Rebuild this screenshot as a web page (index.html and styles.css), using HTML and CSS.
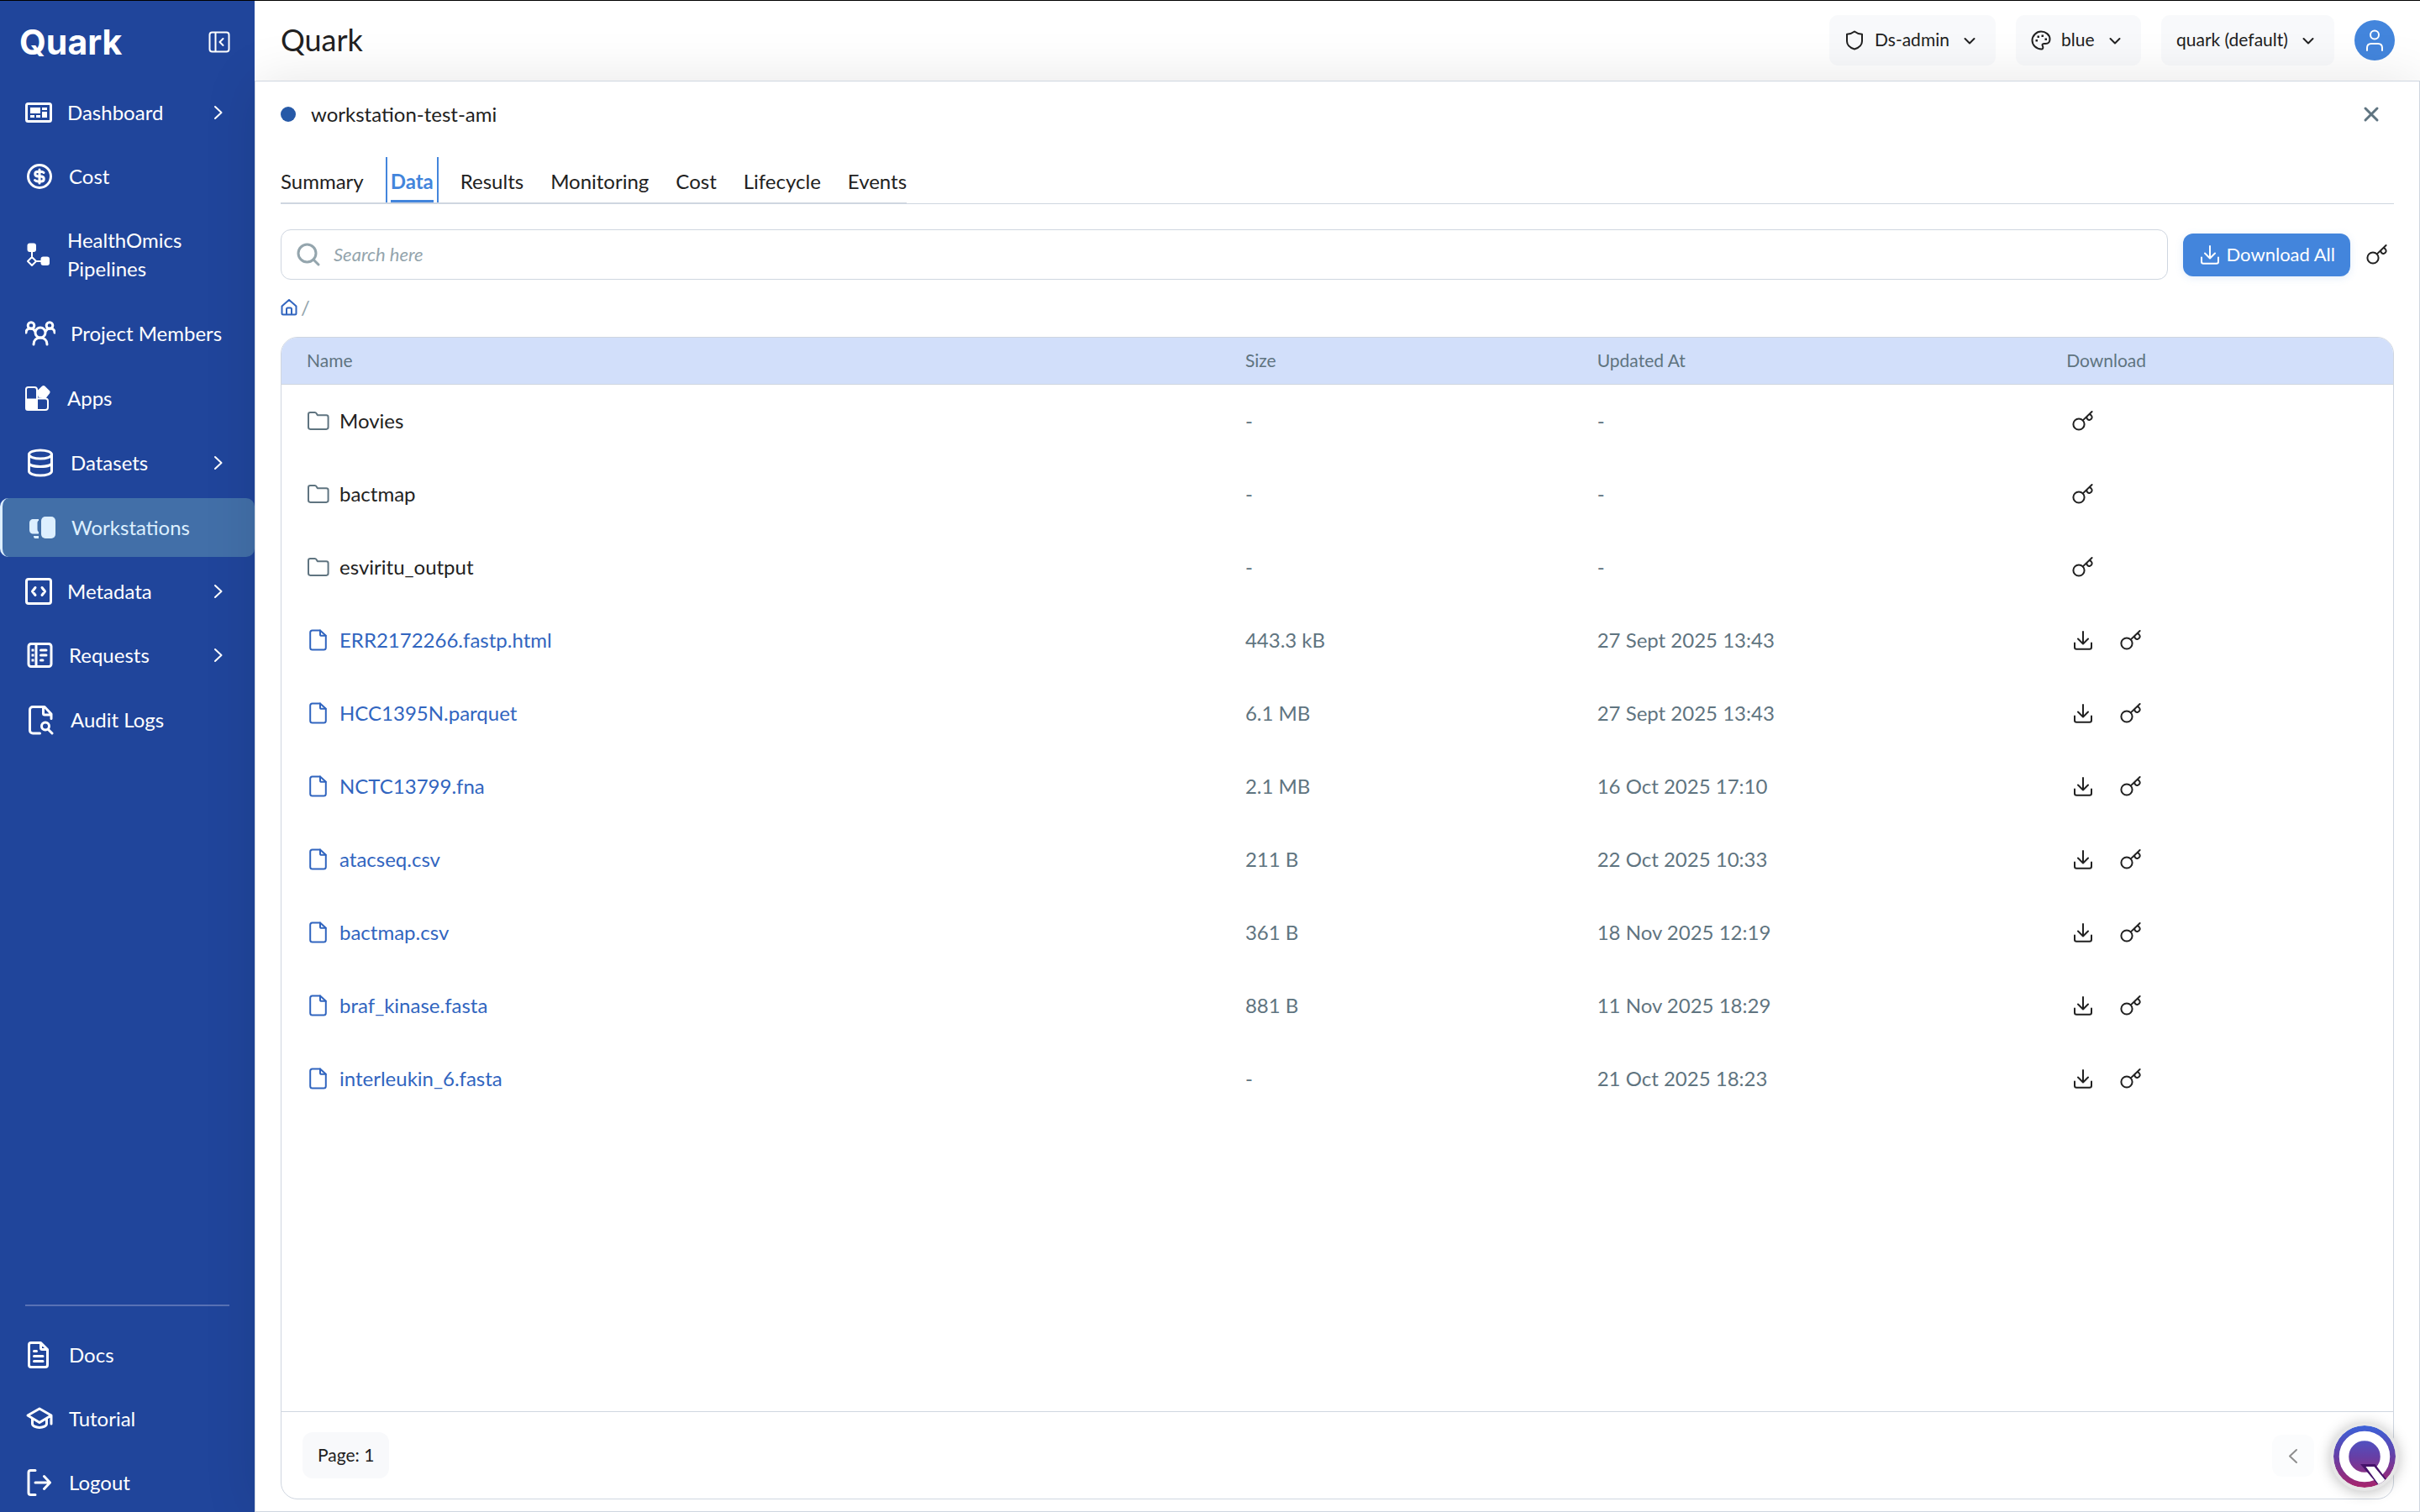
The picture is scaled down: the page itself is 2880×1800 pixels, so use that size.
FILE: index.html
```html
<!DOCTYPE html>
<html lang="en">
<head>
    <meta charset="UTF-8">
    <meta name="viewport" content="width=device-width, initial-scale=1.0">
    <title>Quark</title>
    <link rel="stylesheet" href="styles.css">
</head>
<body>
    <!-- Shared icons -->
    <svg class="sprite" aria-hidden="true">
        <symbol id="icon-key" viewBox="0 0 28 28">
            <circle cx="9" cy="18" r="6.6"/>
            <path d="M13.8 13.4 24.6 3M18.6 8.8c-1 2.6 1.6 4.6 3.6 4 2.4-.8 3.4-3.4 1.4-5.4-.6-.6-1-.8-1.6-1.2"/>
        </symbol>
        <symbol id="icon-download" viewBox="0 0 28 28">
            <path d="M14 4v14M8 12.5l6 6 6-6M4 17.5v5c0 1.4.8 2.2 2.2 2.2h15.6c1.4 0 2.2-.8 2.2-2.2v-5"/>
        </symbol>
        <symbol id="icon-folder" viewBox="0 0 28 28">
            <path d="M2 6.2c0-1.4.9-2.3 2.3-2.3h5.4c.9 0 1.4.4 1.8 1.1l1 1.6c.3.5.8.7 1.4.7h9.400c1.400 0 2.300.9 2.300 2.300v12c0 1.400-.9 2.300-2.300 2.300H4.300c-1.400 0-2.300-.9-2.300-2.300z"/>
        </symbol>
        <symbol id="icon-file" viewBox="0 0 28 28">
            <path d="M16 2.400H6.700c-1.500 0-2.500 1-2.500 2.500v18.200c0 1.500 1 2.500 2.500 2.500h13.600c1.500 0 2.500-1 2.500-2.500V8.800z"/>
            <path d="M16 2.600v4.600c0 1 .6 1.600 1.600 1.600h5"/>
        </symbol>
        <symbol id="icon-right" viewBox="0 0 24 24">
            <path d="M7 5l7.500 7L7 19"/>
        </symbol>
        <symbol id="icon-down" viewBox="0 0 24 24">
            <path d="M6.500 10l5.500 5.500 5.500-5.500"/>
        </symbol>
    </svg>

    <aside class="sidebar">
        <div class="brand">
            <span class="logo">Quark</span>
            <button type="button" class="icon-btn" aria-label="Collapse menu">
                <svg class="icon icon-28" viewBox="0 0 28 28"><rect x="2.500" y="2.500" width="23" height="23" rx="3"/><path d="M9.500 3v22M18.500 10l-4 4 4 4"/></svg>
            </button>
        </div>

        <nav class="menu">
            <a href="#">
                <svg class="icon icon-32" viewBox="0 0 32 32"><rect x="1.500" y="5.500" width="29" height="21" rx="2"/><path class="solid" d="M6 10h12v7H6zM20 10h6v3h-6zM20 15h6v7h-6zM6 19h5v3H6zM13 19h5v3h-5z"/></svg>
                <span>Dashboard</span>
                <svg class="icon icon-24 arrow"><use href="#icon-right"/></svg>
            </a>
            <a href="#">
                <svg class="icon icon-34" viewBox="0 0 34 34"><circle cx="17" cy="17" r="13.500"/><path d="M17 9v16M22 12.500c-1-1-2-1.300-3.500-1.300h-3c-5 0-5 5.800 0 5.800h3c5 0 5 6 0 6h-3c-1.700 0-3-.5-4-1.500"/></svg>
                <span>Cost</span>
            </a>
            <a href="#">
                <svg class="icon icon-32 thin" viewBox="0 0 32 32"><rect class="solid" x="2.500" y="2.500" width="10.500" height="10.500" rx="3"/><rect class="solid" x="18.500" y="18.500" width="10.500" height="10.500" rx="3"/><path d="M8 12v7M13 24h6M8 19l5 5-5 5-5-5z"/></svg>
                <span>HealthOmics Pipelines</span>
            </a>
            <a href="#">
                <svg class="icon icon-36" viewBox="0 0 36 36"><circle cx="7" cy="8.500" r="3.800"/><circle cx="29" cy="8.500" r="3.800"/><circle cx="18" cy="17" r="6"/><path d="M1 17c0-3 2-5 5-5 2.500 0 4.500 1 5.500 3M35 17c0-3-2-5-5-5-2.500 0-4.500 1-5.500 3M10 31c0-5 3.500-8 8-8s8 3 8 8"/></svg>
                <span>Project Members</span>
            </a>
            <a href="#">
                <svg class="icon icon-32 thin" viewBox="0 0 32 32"><path d="M1 17V5.500C1 4 2 3 3.500 3H11c2 0 3 1 3 3v11M15 16.500h9c2 0 3 1 3 3V27c0 2-1 3-3 3h-9"/><path class="solid" d="M0 16.500h15V31H3c-2 0-3-1-3-3zM20 1.800c1-1 2.500-1 3.500 0l5.300 5.300c1 1 1 2 .3 3.200L25 15.500c-.6.700-1.400 1-2.400.8l-5.400-.8c-1-.2-1.700-.8-1.900-1.800l-1-5.200c-.1-.8.100-1.300.7-1.900z"/></svg>
                <span>Apps</span>
            </a>
            <a href="#">
                <svg class="icon icon-36" viewBox="0 0 36 36"><ellipse cx="18" cy="8" rx="13.500" ry="5"/><path d="M4.500 8v20c0 2.800 6 5 13.500 5s13.500-2.200 13.500-5V8M4.500 18c0 2.800 6 4.500 13.500 4.500s13.500-1.700 13.500-4.500"/></svg>
                <span>Datasets</span>
                <svg class="icon icon-24 arrow"><use href="#icon-right"/></svg>
            </a>
            <a href="#" class="active">
                <svg class="icon icon-36" viewBox="0 0 36 36"><rect class="solid" x="18" y="5" width="17" height="26" rx="5"/><path class="solid" d="M9 8h6v2c-1.500 0-1.500 2-1.500 4v4c0 3 0 4.500 1.500 5v2.500H9c-3.500 0-5-2-5-5V13c0-3 1.500-5 5-5zM9 28h6v3H11c-1.500 0-2-1-2-3z"/></svg>
                <span>Workstations</span>
            </a>
            <a href="#">
                <svg class="icon icon-32" viewBox="0 0 32 32"><rect x="1.500" y="1.500" width="29" height="29" rx="2.500"/><path class="bold" d="M12 11.500L8.500 16l3.500 4.500M20 11.500l3.500 4.500-3.500 4.500"/></svg>
                <span>Metadata</span>
                <svg class="icon icon-24 arrow"><use href="#icon-right"/></svg>
            </a>
            <a href="#">
                <svg class="icon icon-34" viewBox="0 0 34 34"><rect x="4" y="3.500" width="27" height="27" rx="3"/><path d="M13 4v26M18.500 11H25M18.500 17H25M18.500 23H21"/><path class="solid" d="M7.500 9.500h3v3h-3zM7.500 15.500h3v3h-3zM7.500 21.500h3v3h-3z"/></svg>
                <span>Requests</span>
                <svg class="icon icon-24 arrow"><use href="#icon-right"/></svg>
            </a>
            <a href="#">
                <svg class="icon icon-36" viewBox="0 0 36 36"><path d="M31 16.500v-5.500L23 2.500H9c-2 0-3.500 1.500-3.500 3.500v24.500c0 2 1.500 3.500 3.500 3.500h8.500M21.500 3v7.500c0 1 .500 1.500 1.500 1.500h8M27.500 29.500l4.500 4.500"/><circle cx="24" cy="25.500" r="4.500"/></svg>
                <span>Audit Logs</span>
            </a>
        </nav>

        <nav class="menu menu-bottom">
            <a href="#">
                <svg class="icon icon-34" viewBox="0 0 34 34"><path d="M18.500 2.500H7c-1.500 0-2.500 1-2.500 2.500v24c0 1.500 1 2.500 2.500 2.500h17c1.500 0 2.500-1 2.500-2.500V10.500zM18.500 3v6c0 1 .500 1.500 1.500 1.500h6.500M10.500 12.500h3M10.500 18.500h10.500M10.500 24.500h10.500"/></svg>
                <span>Docs</span>
            </a>
            <a href="#">
                <svg class="icon icon-34" viewBox="0 0 34 34"><path d="M17 5L3 13l14 8.500L31 13zM31 13v10M8.500 17v6c0 2.500 4 4.500 8.500 4.500s8.500-2 8.500-4.500v-6"/></svg>
                <span>Tutorial</span>
            </a>
            <a href="#">
                <svg class="icon icon-34" viewBox="0 0 34 34"><path d="M12 2.500H6.500c-1.500 0-2.500 1-2.500 2.500v24c0 1.500 1 2.500 2.500 2.500H12M12 17h17M22.500 9.500L29.500 17l-7 7.500"/></svg>
                <span>Logout</span>
            </a>
        </nav>
    </aside>

    <div class="page">
        <header class="topbar">
            <h1>Quark</h1>
            <label class="picker">
                <svg class="icon icon-24" viewBox="0 0 24 24"><path d="M12 1.500c2.500 2 5 3 9 3.200V13c0 4.500-4 8-9 9.500C7 21 3 17.500 3 13V4.700c4-.2 6.500-1.200 9-3.200z"/></svg>
                <select aria-label="Role"><option>Ds-admin</option></select>
                <svg class="icon icon-24"><use href="#icon-down"/></svg>
            </label>
            <label class="picker">
                <svg class="icon icon-24" viewBox="0 0 24 24"><path d="M12.500 22.500C6 22.500 1.500 17.500 1.500 12S6.500 1.500 12 1.500 22.500 5.500 22.500 10.500c0 4-2.500 5.500-5 5.500h-2c-2 0-2.500 1.500-1.500 3 .8 1.500.3 3.500-1.500 3.500z"/><path class="solid" d="M5.500 11h2.500v2.500H5.500zM7.500 6.500H10V9H7.500zM12.500 5.500H15V8h-2.500zM16.500 9.500H19V12h-2.500z"/></svg>
                <select aria-label="Theme"><option>blue</option></select>
                <svg class="icon icon-24"><use href="#icon-down"/></svg>
            </label>
            <label class="picker">
                <select aria-label="Project"><option>quark (default)</option></select>
                <svg class="icon icon-24"><use href="#icon-down"/></svg>
            </label>
            <button type="button" class="avatar" aria-label="Account">
                <svg class="icon icon-28" viewBox="0 0 28 28"><circle cx="14" cy="7.500" r="5"/><path d="M5 26v-3c0-3 2-5 5-5h8c3 0 5 2 5 5v3"/></svg>
            </button>
        </header>

        <main class="panel">
            <div class="panel-title">
                <span class="dot"></span>
                <h2>workstation-test-ami</h2>
                <button type="button" class="icon-btn close" aria-label="Close">
                    <svg class="icon icon-24 bold" viewBox="0 0 24 24"><path d="M5 5l14 14M19 5L5 19"/></svg>
                </button>
            </div>

            <div class="tab-bar">
                <nav class="tabs">
                    <a href="#">Summary</a>
                    <a href="#" class="current"><span>Data</span></a>
                    <a href="#">Results</a>
                    <a href="#">Monitoring</a>
                    <a href="#">Cost</a>
                    <a href="#">Lifecycle</a>
                    <a href="#">Events</a>
                </nav>
            </div>

            <div class="toolbar">
                <label class="search">
                    <svg class="icon icon-28" viewBox="0 0 28 28"><circle cx="12.500" cy="12.500" r="10.500"/><path d="M20 20l6 6"/></svg>
                    <input type="text" placeholder="Search here" aria-label="Search">
                </label>
                <button type="button" class="download-all">
                    <svg class="icon icon-28"><use href="#icon-download"/></svg>
                    Download All
                </button>
                <button type="button" class="icon-btn" aria-label="Copy path">
                    <svg class="icon icon-28"><use href="#icon-key"/></svg>
                </button>
            </div>

            <div class="breadcrumb">
                <a href="#" aria-label="Home"><svg class="icon icon-20" viewBox="0 0 20 20"><path d="M1.500 8.500L10 1l8.500 7.500V17c0 1-.5 1.500-1.500 1.500H3c-1 0-1.500-.5-1.500-1.500zM7 18.500V12c0-1 .5-1.500 1.500-1.500h3c1 0 1.500.5 1.500 1.500v6.500"/></svg></a>
                <span>/</span>
            </div>

            <div class="files">
                <table>
                    <thead>
                        <tr>
                            <th class="col-name">Name</th>
                            <th class="col-size">Size</th>
                            <th class="col-date">Updated At</th>
                            <th class="col-action">Download</th>
                        </tr>
                    </thead>
                    <tbody>
                        <tr>
                            <td><a href="#" class="folder"><svg class="icon icon-28"><use href="#icon-folder"/></svg>Movies</a></td>
                            <td>-</td>
                            <td>-</td>
                            <td><div class="actions"><button type="button" class="icon-btn" aria-label="Copy key"><svg class="icon icon-28"><use href="#icon-key"/></svg></button></div></td>
                        </tr>
                        <tr>
                            <td><a href="#" class="folder"><svg class="icon icon-28"><use href="#icon-folder"/></svg>bactmap</a></td>
                            <td>-</td>
                            <td>-</td>
                            <td><div class="actions"><button type="button" class="icon-btn" aria-label="Copy key"><svg class="icon icon-28"><use href="#icon-key"/></svg></button></div></td>
                        </tr>
                        <tr>
                            <td><a href="#" class="folder"><svg class="icon icon-28"><use href="#icon-folder"/></svg>esviritu_output</a></td>
                            <td>-</td>
                            <td>-</td>
                            <td><div class="actions"><button type="button" class="icon-btn" aria-label="Copy key"><svg class="icon icon-28"><use href="#icon-key"/></svg></button></div></td>
                        </tr>
                        <tr>
                            <td><a href="#" class="file"><svg class="icon icon-28"><use href="#icon-file"/></svg>ERR2172266.fastp.html</a></td>
                            <td>443.3 kB</td>
                            <td>27 Sept 2025 13:43</td>
                            <td><div class="actions"><button type="button" class="icon-btn" aria-label="Download"><svg class="icon icon-28"><use href="#icon-download"/></svg></button><button type="button" class="icon-btn" aria-label="Copy key"><svg class="icon icon-28"><use href="#icon-key"/></svg></button></div></td>
                        </tr>
                        <tr>
                            <td><a href="#" class="file"><svg class="icon icon-28"><use href="#icon-file"/></svg>HCC1395N.parquet</a></td>
                            <td>6.1 MB</td>
                            <td>27 Sept 2025 13:43</td>
                            <td><div class="actions"><button type="button" class="icon-btn" aria-label="Download"><svg class="icon icon-28"><use href="#icon-download"/></svg></button><button type="button" class="icon-btn" aria-label="Copy key"><svg class="icon icon-28"><use href="#icon-key"/></svg></button></div></td>
                        </tr>
                        <tr>
                            <td><a href="#" class="file"><svg class="icon icon-28"><use href="#icon-file"/></svg>NCTC13799.fna</a></td>
                            <td>2.1 MB</td>
                            <td>16 Oct 2025 17:10</td>
                            <td><div class="actions"><button type="button" class="icon-btn" aria-label="Download"><svg class="icon icon-28"><use href="#icon-download"/></svg></button><button type="button" class="icon-btn" aria-label="Copy key"><svg class="icon icon-28"><use href="#icon-key"/></svg></button></div></td>
                        </tr>
                        <tr>
                            <td><a href="#" class="file"><svg class="icon icon-28"><use href="#icon-file"/></svg>atacseq.csv</a></td>
                            <td>211 B</td>
                            <td>22 Oct 2025 10:33</td>
                            <td><div class="actions"><button type="button" class="icon-btn" aria-label="Download"><svg class="icon icon-28"><use href="#icon-download"/></svg></button><button type="button" class="icon-btn" aria-label="Copy key"><svg class="icon icon-28"><use href="#icon-key"/></svg></button></div></td>
                        </tr>
                        <tr>
                            <td><a href="#" class="file"><svg class="icon icon-28"><use href="#icon-file"/></svg>bactmap.csv</a></td>
                            <td>361 B</td>
                            <td>18 Nov 2025 12:19</td>
                            <td><div class="actions"><button type="button" class="icon-btn" aria-label="Download"><svg class="icon icon-28"><use href="#icon-download"/></svg></button><button type="button" class="icon-btn" aria-label="Copy key"><svg class="icon icon-28"><use href="#icon-key"/></svg></button></div></td>
                        </tr>
                        <tr>
                            <td><a href="#" class="file"><svg class="icon icon-28"><use href="#icon-file"/></svg>braf_kinase.fasta</a></td>
                            <td>881 B</td>
                            <td>11 Nov 2025 18:29</td>
                            <td><div class="actions"><button type="button" class="icon-btn" aria-label="Download"><svg class="icon icon-28"><use href="#icon-download"/></svg></button><button type="button" class="icon-btn" aria-label="Copy key"><svg class="icon icon-28"><use href="#icon-key"/></svg></button></div></td>
                        </tr>
                        <tr>
                            <td><a href="#" class="file"><svg class="icon icon-28"><use href="#icon-file"/></svg>interleukin_6.fasta</a></td>
                            <td>-</td>
                            <td>21 Oct 2025 18:23</td>
                            <td><div class="actions"><button type="button" class="icon-btn" aria-label="Download"><svg class="icon icon-28"><use href="#icon-download"/></svg></button><button type="button" class="icon-btn" aria-label="Copy key"><svg class="icon icon-28"><use href="#icon-key"/></svg></button></div></td>
                        </tr>
                    </tbody>
                </table>

                <div class="pager">
                    <span class="page-number">Page: 1</span>
                    <button type="button" class="prev" aria-label="Previous page" disabled>
                        <svg class="icon icon-24" viewBox="0 0 24 24"><path d="M16 5l-8 7.500 8 7.500"/></svg>
                    </button>
                </div>
            </div>
        </main>
    </div>

    <button type="button" class="assistant" aria-label="Open assistant">
        <svg viewBox="0 0 74 74">
            <defs>
                <linearGradient id="ring" x1="0" y1="0" x2="0" y2="1">
                    <stop offset="0" stop-color="#3b62d9"/>
                    <stop offset="0.500" stop-color="#663fa6"/>
                    <stop offset="1" stop-color="#a8246c"/>
                </linearGradient>
                <clipPath id="disc"><circle cx="37" cy="37" r="37"/></clipPath>
            </defs>
            <g clip-path="url(#disc)">
                <circle cx="37" cy="37" r="37" fill="url(#ring)"/>
                <circle cx="37" cy="37" r="24.500" fill="none" stroke="#fff" stroke-width="11.500"/>
                <path d="M32 46h17.500L63 64l-8 9z" fill="#46136b"/>
                <path d="M38.500 49h10L62 65.500 55 72z" fill="#fff"/>
            </g>
        </svg>
    </button>
</body>
</html>
```
FILE: styles.css
```css
* {
    box-sizing: border-box;
}

body {
    display: flex;
    height: 100vh;
    margin: 0;
    border-top: 1px solid #000;
    background-color: #fff;
    color: #212121;
    font-family: Lato, "Open Sans", sans-serif;
    font-size: 24px;
    line-height: 34px;
}

a {
    color: inherit;
    text-decoration: none;
}

button,
input,
select {
    font: inherit;
    color: inherit;
}

button {
    padding: 0;
    border: none;
    background: none;
    cursor: pointer;
}

/* Icons */
.sprite {
    position: absolute;
    width: 0;
    height: 0;
}

.icon {
    display: block;
    flex: none;
    fill: none;
    stroke: currentColor;
    stroke-width: 2;
    stroke-linecap: round;
    stroke-linejoin: round;
}

.icon-20 { width: 20px; height: 20px; }
.icon-24 { width: 24px; height: 24px; }
.icon-28 { width: 28px; height: 28px; }
.icon-32 { width: 32px; height: 32px; }
.icon-34 { width: 34px; height: 34px; }
.icon-36 { width: 36px; height: 36px; }

.solid {
    fill: currentColor;
    stroke: none;
}

.bold {
    stroke-width: 3;
}

.icon-btn {
    display: flex;
    align-items: center;
    justify-content: center;
}

/* Sidebar */
.sidebar {
    display: flex;
    flex: none;
    flex-direction: column;
    width: 303px;
    background-color: #20459b;
    color: #fff;
}

.brand {
    display: flex;
    align-items: center;
    justify-content: space-between;
    height: 98px;
    padding: 0 28px 0 23px;
}

.logo {
    font-family: Inter, sans-serif;
    font-size: 41px;
    font-weight: 700;
}

.menu {
    display: flex;
    flex-direction: column;
    gap: 6px;
}

.menu a {
    display: flex;
    align-items: center;
    gap: 18px;
    padding: 18px 30px;
}

.menu .icon {
    stroke-width: 3;
}

.menu .thin,
.menu .arrow {
    stroke-width: 2;
}

.menu .arrow {
    margin-left: auto;
}

.menu .active {
    padding: 17px 28px;
    border-left: 3px solid #ddefff;
    border-radius: 10px;
    background-color: #426fa8;
    color: #ddefff;
}

.menu-bottom {
    margin-top: auto;
}

.menu-bottom::before {
    content: "";
    height: 2px;
    margin: 0 30px 17px;
    background-color: #5872b5;
}

/* Top bar */
.page {
    display: flex;
    flex: 1;
    flex-direction: column;
    min-width: 0;
}

.topbar {
    display: flex;
    align-items: center;
    gap: 24px;
    padding: 17px 30px 18px 31px;
}

.topbar h1 {
    margin: 0 auto 0 0;
    padding-bottom: 2px;
    font-size: 36px;
    font-weight: 400;
}

.picker {
    display: flex;
    align-items: center;
    gap: 12px;
    height: 60px;
    padding: 0 19px 0 18px;
    border-radius: 10px;
    background-color: #f8f9fb;
    font-size: 21px;
}

.picker select {
    padding: 0 0 2px;
    border: none;
    background: none;
    appearance: none;
}

.avatar {
    display: flex;
    align-items: center;
    justify-content: center;
    width: 48px;
    height: 48px;
    border-radius: 50%;
    background-color: #4385dc;
    color: #fff;
}

/* Panel */
.panel {
    display: flex;
    flex: 1;
    flex-direction: column;
    min-height: 0;
    padding: 22px 30px 14px;
    border: 1px solid #cfd6e0;
    background-color: #fff;
    box-shadow: 0 0 60px rgba(0, 0, 0, 0.1);
}

.panel-title {
    display: flex;
    align-items: center;
    gap: 18px;
}

.panel-title h2 {
    margin: 0;
    font-size: 24px;
    font-weight: 400;
}

.dot {
    width: 18px;
    height: 18px;
    border-radius: 50%;
    background-color: #2659a7;
}

.close {
    margin: 0 15px 0 auto;
    color: #5f7480;
}

.tab-bar {
    display: flex;
    margin-top: 34px;
    border-bottom: 1px solid #cfd6e0;
}

.tabs {
    display: flex;
    gap: 32px;
    border-bottom: 1px solid #cfd6e0;
}

.tabs a {
    height: 54px;
    padding-top: 12px;
}

.tabs .current {
    margin: 0 -6px;
    padding-right: 4px;
    padding-left: 4px;
    border-right: 2px solid #4385dc;
    border-left: 2px solid #4385dc;
    color: #4385dc;
    font-weight: 700;
}

.tabs .current span {
    display: block;
    height: 42px;
    border-bottom: 3px solid #4385dc;
}

.toolbar {
    display: flex;
    align-items: center;
    gap: 18px;
    margin-top: 30px;
}

.search {
    display: flex;
    flex: 1;
    align-items: center;
    gap: 16px;
    height: 60px;
    padding: 0 18px;
    border: 1px solid #cfd6e0;
    border-radius: 12px;
    color: #94a5ad;
}

.search .icon {
    stroke-width: 3;
}

.search input {
    flex: 1;
    padding: 0;
    border: none;
    outline: none;
    font-size: 22px;
}

.search input::placeholder {
    color: #94a5ad;
    font-style: italic;
}

.download-all {
    display: flex;
    align-items: center;
    gap: 6px;
    height: 51px;
    padding: 0 18px;
    border-radius: 12px;
    background-color: #4385dc;
    box-shadow: 0 2px 10px rgba(67, 133, 220, 0.15);
    color: #fff;
    font-size: 22px;
}

.toolbar > .icon-btn {
    margin-right: 6px;
}

.breadcrumb {
    display: flex;
    align-items: center;
    gap: 4px;
    height: 68px;
    padding-bottom: 3px;
    color: #94a5ad;
}

.breadcrumb a {
    color: #3165bf;
}

/* Files */
.files {
    display: flex;
    flex: 1;
    flex-direction: column;
    overflow: hidden;
    border: 1px solid #cfd6e0;
    border-radius: 20px;
}

table {
    width: 100%;
    border-collapse: collapse;
    table-layout: fixed;
}

th,
td {
    padding: 0 30px;
    color: #5f7480;
    font-weight: 400;
    text-align: left;
}

th {
    height: 55px;
    border-bottom: 1px solid #cfd6e0;
    background-color: #d2dffa;
    font-size: 21px;
}

td {
    height: 87px;
}

.col-name { width: calc(100% * 8 / 18); }
.col-size { width: calc(100% * 3 / 18); }
.col-date { width: calc(100% * 4 / 18); }
.col-action { width: calc(100% * 3 / 18); }

.folder,
.file {
    display: flex;
    align-items: center;
    gap: 11px;
    color: #3165bf;
}

.folder {
    color: #212121;
}

.folder .icon {
    color: #5f7480;
}

.actions {
    display: flex;
    gap: 17px;
    color: #212121;
}

.actions .icon-btn {
    width: 40px;
    height: 40px;
}

.pager {
    display: flex;
    align-items: center;
    justify-content: space-between;
    height: 104px;
    margin-top: auto;
    padding: 0 94px 0 25px;
    border-top: 1px solid #cfd6e0;
}

.page-number {
    padding: 10px 18px 11px;
    border-radius: 12px;
    background-color: #f8f9fb;
    font-size: 21px;
}

.prev {
    display: flex;
    align-items: center;
    justify-content: center;
    width: 50px;
    height: 50px;
    border-radius: 12px;
    background-color: #fbfcfd;
    color: #8e8e8e;
}

/* Floating assistant button */
.assistant {
    position: fixed;
    right: 25px;
    bottom: 25px;
    width: 82px;
    height: 82px;
    padding: 4px;
    border-radius: 50%;
    background-color: #e6e6e6;
    box-shadow: 0 2px 16px rgba(0, 0, 0, 0.25);
}

.assistant svg {
    display: block;
}
```
